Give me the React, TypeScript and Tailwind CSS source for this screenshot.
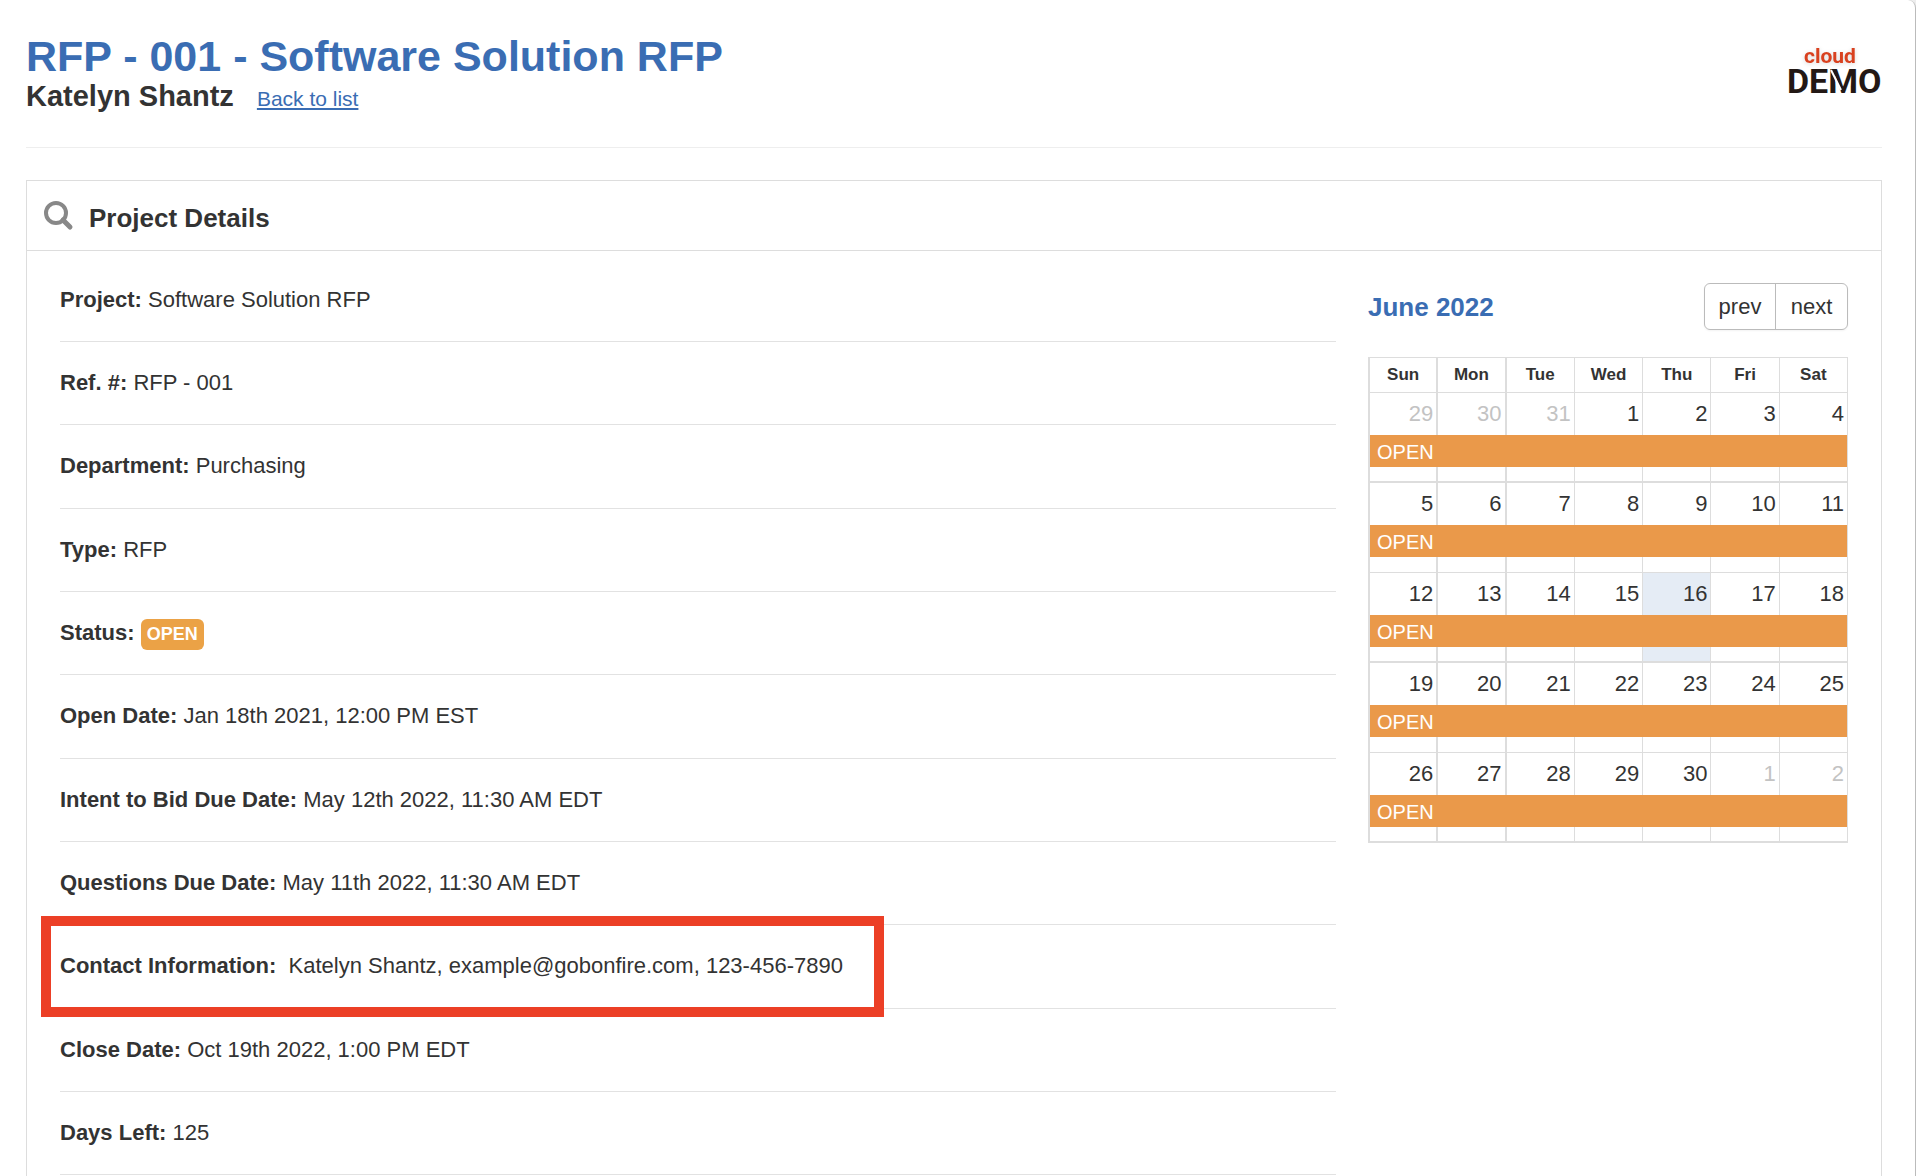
import { Fragment, type ReactNode } from "react";

interface Detail {
  label: string;
  value: ReactNode;
  highlighted?: boolean;
}

const details: Detail[] = [
  { label: "Project:", value: "Software Solution RFP" },
  { label: "Ref. #:", value: "RFP - 001" },
  { label: "Department:", value: "Purchasing" },
  { label: "Type:", value: "RFP" },
  { label: "Status:", value: <StatusBadge /> },
  { label: "Open Date:", value: "Jan 18th 2021, 12:00 PM EST" },
  { label: "Intent to Bid Due Date:", value: "May 12th 2022, 11:30 AM EDT" },
  { label: "Questions Due Date:", value: "May 11th 2022, 11:30 AM EDT" },
  {
    label: "Contact Information:",
    value: <>&nbsp;Katelyn Shantz, example@gobonfire.com, 123-456-7890</>,
    highlighted: true,
  },
  { label: "Close Date:", value: "Oct 19th 2022, 1:00 PM EDT" },
  { label: "Days Left:", value: "125" },
];

const weekdays = ["Sun", "Mon", "Tue", "Wed", "Thu", "Fri", "Sat"];

const weeks = [
  [29, 30, 31, 1, 2, 3, 4],
  [5, 6, 7, 8, 9, 10, 11],
  [12, 13, 14, 15, 16, 17, 18],
  [19, 20, 21, 22, 23, 24, 25],
  [26, 27, 28, 29, 30, 1, 2],
];

const TODAY = 16;

function isOtherMonth(week: number, day: number) {
  return (week === 0 && day > 7) || (week === weeks.length - 1 && day < 7);
}

// The first two column rules are heavier than the rest
function columnRule(column: number) {
  return column < 2 ? "border-r-2" : "border-r";
}

function StatusBadge() {
  return (
    <span className="-my-px inline-block rounded-md bg-[#eba246] px-[6px] text-[18px] leading-[31px] font-bold text-white">
      OPEN
    </span>
  );
}

function Logo() {
  return (
    <svg
      className="shrink-0 overflow-visible font-[Roboto,sans-serif] font-bold"
      width="94"
      height="52"
      viewBox="0 0 94 52"
      role="img"
      aria-label="cloud DEMO"
    >
      <text x="16" y="16" fill="#d9411f" fontSize="21" className="drop-shadow-sm">
        cloud
      </text>
      <text x="-1" y="46" fill="#231815" fontSize="34">
        DEMO
      </text>
      {/* Slit through the M */}
      <path d="M43 23L53 43" stroke="#fff" strokeWidth="2" />
    </svg>
  );
}

function PageHeader() {
  return (
    <header className="flex items-center justify-between border-b border-[#eee] pt-8 pb-[33px]">
      <div>
        <h1 className="text-[43px] leading-[49px] font-bold text-[#3a6db3]">
          RFP - 001 - Software Solution RFP
        </h1>
        <div className="flex items-baseline gap-[23px]">
          <h2 className="text-[29px] leading-[31px] font-bold">Katelyn Shantz</h2>
          <a href="#list" className="text-[21px] leading-[31px] text-[#3a6db3] underline">
            Back to list
          </a>
        </div>
      </div>
      <Logo />
    </header>
  );
}

function DetailList() {
  return (
    <dl className="min-w-0 flex-1 pt-2">
      {details.map(({ label, value, highlighted }) => (
        <div
          key={label}
          className="relative border-b border-[#e2e2e2] py-[25px] leading-8 nth-[3n+3]:pb-[26px]"
        >
          <dt className="inline font-bold">{label}</dt> <dd className="inline">{value}</dd>
          {highlighted && (
            <div className="absolute -top-[9px] -bottom-[9px] -left-[19px] w-[843px] border-[10px] border-[#ec3f26]" />
          )}
        </div>
      ))}
    </dl>
  );
}

function Calendar() {
  return (
    <section className="w-[480px] shrink-0">
      <div className="mb-[27px] flex items-center justify-between">
        <h3 className="text-[26px] leading-8 font-bold text-[#3a6db3]">June 2022</h3>
        <div className="flex rounded-md border border-[#bbb] shadow-xs">
          <button type="button" className="h-[45px] w-[71px] border-r border-[#bbb]">
            prev
          </button>
          <button type="button" className="h-[45px] w-[71px]">
            next
          </button>
        </div>
      </div>

      <table className="w-full table-fixed border-separate border-spacing-0 border-t border-l-2 border-[#ddd]">
        <thead>
          <tr>
            {weekdays.map((day, column) => (
              <th
                key={day}
                className={`h-[35px] border-b border-[#ddd] p-0 text-[17px] leading-6 font-bold ${columnRule(column)}`}
              >
                {day}
              </th>
            ))}
          </tr>
        </thead>
        <tbody>
          {weeks.map((week, i) => (
            <Fragment key={i}>
              <tr>
                {week.map((day, column) => (
                  <td
                    key={day}
                    className={`h-[42px] border-[#ddd] p-0 pr-[3px] text-right leading-8 ${columnRule(column)} ${
                      isOtherMonth(i, day) ? "text-[#c3c3c3]" : ""
                    } ${day === TODAY ? "bg-[#e5ecf5]" : ""}`}
                  >
                    {day}
                  </td>
                ))}
              </tr>
              <tr>
                <td
                  colSpan={7}
                  className="h-8 border-r border-[#ddd] bg-[#ea994a] bg-clip-padding p-0 pt-[2px] pl-[7px] text-[20px] leading-[30px] text-white"
                >
                  OPEN
                </td>
              </tr>
              <tr>
                {week.map((day, column) => (
                  <td
                    key={day}
                    className={`h-4 border-[#ddd] p-0 ${columnRule(column)} ${
                      i % 2 === 0 ? "border-b-2" : "border-b"
                    } ${day === TODAY ? "bg-[#e5ecf5]" : ""}`}
                  />
                ))}
              </tr>
            </Fragment>
          ))}
        </tbody>
      </table>
    </section>
  );
}

export default function App() {
  return (
    <div className="h-screen overflow-hidden bg-[#ededed] font-['Helvetica_Neue','Liberation_Sans',sans-serif] text-[22px] text-[#333]">
      <div className="min-h-full rounded-tr-lg border-r border-[#bbb] bg-white pr-[33px] pl-[26px]">
        <PageHeader />

        <main className="mt-8 border border-[#ddd]">
          <div className="flex items-center gap-[15px] border-b border-[#ddd] px-[17px] pt-[17px] pb-4">
            <svg width="30" height="30" viewBox="0 0 30 30" fill="none" stroke="#888" aria-hidden="true">
              <circle cx="12" cy="12" r="10" strokeWidth="4" />
              <path d="M19 19L26 26" strokeWidth="5" strokeLinecap="round" />
            </svg>
            <h2 className="pt-1 text-[26px] leading-8 font-bold">Project Details</h2>
          </div>

          <div className="flex items-start gap-8 px-[33px] pb-8">
            <DetailList />
            <div className="pt-8">
              <Calendar />
            </div>
          </div>
        </main>
      </div>
    </div>
  );
}
